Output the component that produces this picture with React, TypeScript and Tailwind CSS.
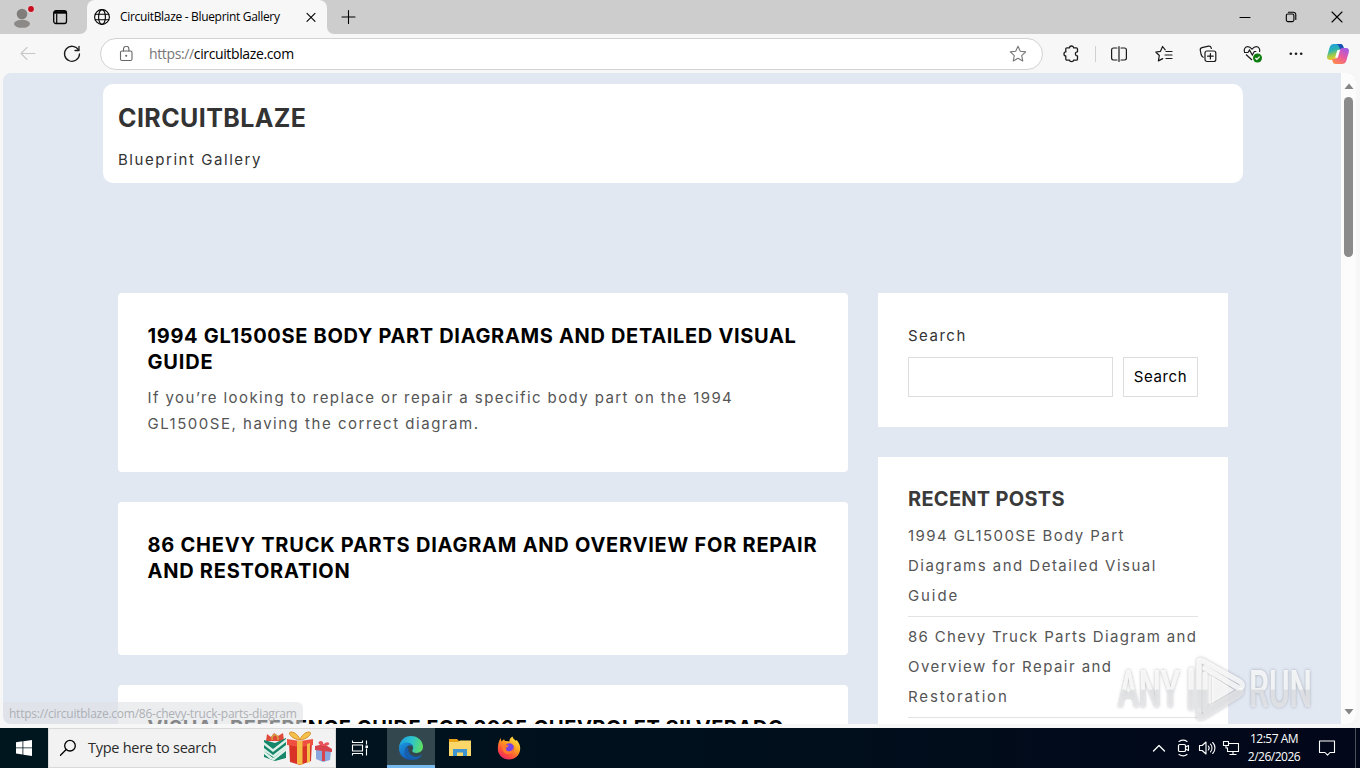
import type { ReactNode } from "react"

function Icon({ size = 16, className, children }: { size?: number; className?: string; children: ReactNode }) {
  return (
    <svg
      width={size}
      height={size}
      viewBox={`0 0 ${size} ${size}`}
      fill="none"
      stroke="currentColor"
      strokeWidth="1.1"
      strokeLinecap="round"
      strokeLinejoin="round"
      className={className}
    >
      {children}
    </svg>
  )
}

function TitleBar() {
  return (
    <div className="flex h-[34px] shrink-0 bg-[#f7f7f7] text-black">
      <div className="flex w-[87px] shrink-0 items-center rounded-br-[7px] bg-[#cdcdcd] pl-2.5">
        <svg width="26" height="26" viewBox="0 0 26 26">
          <circle cx="12" cy="10" r="5.3" fill="#817d7b" />
          <ellipse cx="12" cy="19.8" rx="8" ry="4" fill="#8c8987" />
          <circle cx="21" cy="5" r="3.8" fill="#e9cfd0" />
          <circle cx="21" cy="5" r="2.9" fill="#c50f1f" />
        </svg>
        <Icon size={16} className="ml-4">
          <rect x="1.7" y="1.7" width="12.8" height="12.8" rx="2.2" strokeWidth="1.3" />
          <path d="M2 3.4h12" strokeWidth="2.6" strokeLinecap="butt" />
          <path d="M4.7 5v9" strokeWidth="1.2" />
        </Icon>
      </div>
      <div className="flex w-[240px] shrink-0 bg-[#cdcdcd]">
        <div className="flex flex-1 items-center rounded-t-lg bg-[#f7f7f7] pl-[6px]">
          <Icon size={18}>
            <circle cx="9" cy="9" r="7.4" />
            <ellipse cx="9" cy="9" rx="3.4" ry="7.4" />
            <path d="M2.2 6.3h13.6M2.2 11.7h13.6" />
          </Icon>
          <span className="ml-[9px] w-[180px] text-xs tracking-[-0.32px] whitespace-nowrap">
            CircuitBlaze - Blueprint Gallery
          </span>
          <Icon size={16} className="ml-[3px]">
            <path d="M4 4.300l8 8M12 4.300l-8 8" />
          </Icon>
        </div>
      </div>
      <div className="flex flex-1 items-center rounded-bl-[7px] bg-[#cdcdcd] pl-[13px]">
        <Icon size={16}>
          <path d="M8.5 1.500v13M2 8h13" />
        </Icon>
      </div>
      <div className="flex items-center bg-[#cdcdcd]">
        <div className="flex w-[46px] justify-center">
          <Icon size={12}>
            <path d="M1 6.5h10" />
          </Icon>
        </div>
        <div className="flex w-[46px] justify-center">
          <Icon size={12}>
            <rect x="1.3" y="3" width="7.6" height="7.6" rx="1.6" />
            <path d="M3.4 1.2h4.800a2.600 2.600 0 0 1 2.600 2.600v4.600" />
          </Icon>
        </div>
        <div className="flex w-[46px] justify-center">
          <Icon size={12}>
            <path d="M1 1l10 10M11 1L1 11" />
          </Icon>
        </div>
      </div>
    </div>
  )
}

function CopilotLogo() {
  return (
    <svg width="24" height="24" viewBox="0 0 24 24">
      <defs>
        <linearGradient id="cpA" x1="0" y1="0" x2="0.3" y2="1">
          <stop offset="0" stopColor="#1a9be8" />
          <stop offset="0.45" stopColor="#2fb5b0" />
          <stop offset="0.75" stopColor="#a5cc45" />
          <stop offset="1" stopColor="#f7c52c" />
        </linearGradient>
        <linearGradient id="cpB" x1="0.8" y1="0" x2="0.2" y2="1">
          <stop offset="0" stopColor="#a05be8" />
          <stop offset="0.5" stopColor="#ea5a9c" />
          <stop offset="1" stopColor="#ff8a4a" />
        </linearGradient>
      </defs>
      <path d="M8 2h6.5c1.5 0 2.3 1 2.7 2.3L18 7h-2.500c-1.700 0-2.700 1-3.200 2.700l-1.700 5.600C10 17 9 18 7.300 18H4c-2.500 0-3.400-1.900-2.800-4.200l2.500-8.500C4.400 3.200 5.800 2 8 2z" fill="url(#cpA)" />
      <path d="M9 2h5.500c1.500 0 2.300 1 2.700 2.300L18 7h-4L12.500 3.500C12 2.500 11 2 9 2z" fill="#1a4fb8" />
      <path d="M16 22H9.500c-1.500 0-2.300-1-2.700-2.300L6 17h2.500c1.700 0 2.700-1 3.200-2.700l1.700-5.600C14 7 15 6 16.700 6H20c2.500 0 3.400 1.900 2.800 4.200l-2.500 8.500C19.600 20.800 18.200 22 16 22z" fill="url(#cpB)" />
      <path d="M14 8h-1.500c-.8 0-1.300.5-1.600 1.400l-1.800 6.300h1.700c.7 0 1.200-.4 1.400-1.300z" fill="#fff" />
    </svg>
  )
}

function Toolbar() {
  return (
    <div className="flex h-[39px] shrink-0 items-center bg-[#f7f7f7] pt-px text-[#1b1b1b]">
      <div className="flex w-[50px] justify-end pr-3.5 text-[#c8c8c8]">
        <Icon size={16}>
          <path d="M15 7.500H1M7 1.500l-6 6 6 6" />
        </Icon>
      </div>
      <div className="flex w-[50px] pl-[13px]">
        <Icon size={18}>
          <path d="M15.600 5.200A7.500 7.500 0 1 0 16.500 9" strokeWidth="1.300" />
          <path d="M16 1.500v4h-4" strokeWidth="1.300" />
        </Icon>
      </div>
      <div className="flex h-8 w-[943px] items-center rounded-full border border-[#d2d2d2] bg-white">
        <Icon size={16} className="ml-[17px] text-[#666]">
          <rect x="2.500" y="5" width="11.500" height="9.500" rx="1.500" />
          <path d="M5.500 5V3a2.700 2.700 0 0 1 5.400 0v2" />
          <circle cx="8.200" cy="9.700" r=".5" fill="currentColor" />
        </Icon>
        <span className="ml-[15px] text-sm tracking-[-0.37px] text-black">
          <span className="text-[#767676]">https://</span>circuitblaze.com
        </span>
        <Icon size={18} className="mr-[15px] ml-auto text-[#767676]">
          <path d="M9 1.300l2.300 5 5.400.6-4 3.700 1.100 5.400L9 13.300 4.200 16l1.100-5.400-4-3.700 5.400-.6z" />
        </Icon>
      </div>
      <div className="ml-[19px] flex items-center">
        <Icon size={18}>
          <path
            d="M5 2.800h2.600c0-2.400 4-2.400 4 0h2.700c.7 0 1.200.5 1.200 1.200v2.800c-2.800-.3-2.800 4.400 0 4.100v3.100c0 .7-.5 1.200-1.200 1.200h-2.700c0 1.900-4 1.900-4 0H5c-.7 0-1.200-.5-1.200-1.200v-3C1.400 11 1.400 6.900 3.800 6.900V4c0-.7.5-1.200 1.200-1.200z"
            strokeWidth="1.300"
          />
        </Icon>
        <span className="ml-[15px] h-4 w-px bg-[#d0d0d0]" />
        <Icon size={18} className="ml-[14px]">
          <path d="M7 3H3.500C2.400 3 1.600 3.800 1.600 4.900v8.200c0 1.100.8 1.900 1.900 1.900H7M11 3h3.500c1.100 0 1.900.8 1.900 1.900v8.200c0 1.100-.8 1.900-1.900 1.900H11M9 1.500v15" strokeWidth="1.200" />
        </Icon>
        <Icon size={18} className="ml-[27px]">
          <path d="M10.200 4.800L7.600 1.500 5.500 6.300l-4.700.7 3.500 3.500-.9 5.400 4.300-2.300M11 6.500h6M10 10h7M11 13.500h6" strokeWidth="1.200" />
        </Icon>
        <Icon size={18} className="ml-[26px]">
          <rect x="6" y="6" width="10.800" height="10.500" rx="2" strokeWidth="1.200" />
          <path d="M11.400 8.500v5.500M8.600 11.200h5.600M4.200 12.200C3 11.800 2.600 11 2.200 9.800L1.300 5.500C1 4 1.700 3 3 2.700l6.500-1.500c1.500-.3 2.500.5 2.800 2.300" strokeWidth="1.200" />
        </Icon>
        <svg width="20" height="20" viewBox="0 0 20 20" className="ml-[26px]" fill="none" stroke="currentColor" strokeWidth="1.200">
          <path d="M1.500 8C.5 5 2.300 2.700 4.700 2.700c1.900 0 3 .9 4.300 2.400 1.300-1.500 2.400-2.400 4.300-2.400 2.400 0 4.200 2.300 3.200 5.300M3 10.500L9 16M1 8.500h4L6.500 6l2.800 5 2-3.500h2" />
          <circle cx="14.500" cy="14" r="4.500" fill="#107c10" stroke="none" />
          <path d="M12.400 14l1.500 1.500 2.700-2.800" stroke="#fff" />
        </svg>
        <svg width="16" height="16" viewBox="0 0 16 16" className="ml-[25px]" fill="currentColor">
          <circle cx="2.800" cy="7.700" r="1.300" />
          <circle cx="8" cy="7.700" r="1.300" />
          <circle cx="13.200" cy="7.700" r="1.300" />
        </svg>
        <div className="ml-[22px]">
          <CopilotLogo />
        </div>
      </div>
    </div>
  )
}

function Post({ height, title, children }: { height: string; title: ReactNode; children?: ReactNode }) {
  return (
    <article className={`${height} shrink-0 rounded bg-white px-[29.5px] pt-[30px]`}>
      <h2 className="text-[20px] leading-[26px] font-bold whitespace-nowrap text-black">{title}</h2>
      {children}
    </article>
  )
}

function Page() {
  return (
    <div className="h-[651px] flex-1 overflow-hidden rounded-bl-lg font-[Inter,sans-serif] text-[15px]">
      <header className="mt-[11px] ml-[100px] h-[99px] w-[1140px] rounded-[10px] bg-white pt-[18px] pl-[15px]">
        <h1 className="text-[25px] leading-8 font-bold tracking-[0.4px] text-[#333]">CIRCUITBLAZE</h1>
        <p className="mt-[13px] leading-[26px] tracking-[1.55px] text-[#333]">Blueprint Gallery</p>
      </header>
      <div className="mt-[110px] ml-[115px] flex gap-[30px]">
        <main className="flex w-[730px] flex-col gap-[30px]">
          <Post
            height="h-[179px]"
            title={
              <>
                <span className="block tracking-[0.67px]">1994 GL1500SE BODY PART DIAGRAMS AND DETAILED VISUAL</span>
                <span className="block tracking-[0.8px]">GUIDE</span>
              </>
            }
          >
            <p className="mt-[10px] leading-[26px] whitespace-nowrap text-[#555]">
              <span className="block tracking-[1.41px]">If you’re looking to replace or repair a specific body part on the 1994</span>
              <span className="block tracking-[1.52px]">GL1500SE, having the correct diagram.</span>
            </p>
          </Post>
          <Post
            height="h-[153px]"
            title={
              <>
                <span className="block tracking-[0.76px]">86 CHEVY TRUCK PARTS DIAGRAM AND OVERVIEW FOR REPAIR</span>
                <span className="block tracking-[0.75px]">AND RESTORATION</span>
              </>
            }
          />
          <Post
            height="h-[153px]"
            title={<span className="block tracking-[0.53px]">VISUAL REFERENCE GUIDE FOR 2005 CHEVROLET SILVERADO</span>}
          />
        </main>
        <aside className="flex w-[350px] flex-col gap-[30px]">
          <section className="h-[134px] bg-white px-[30px] pt-[30px]">
            <label className="block leading-[26px] tracking-[1.5px] text-[#333]">Search</label>
            <div className="mt-2 flex gap-[10px]">
              <div className="h-10 w-[205px] border border-[#ddd]" />
              <button className="h-10 w-[75px] border border-[#ddd] text-[15px] tracking-[0.6px] text-black">Search</button>
            </div>
          </section>
          <section className="h-[400px] bg-white px-[30px] pt-[29px]">
            <h3 className="text-[20px] leading-[26px] font-bold tracking-[0.28px] text-[#3a3a3a]">RECENT POSTS</h3>
            <ul className="mt-[9px] leading-[30px] whitespace-nowrap text-[#555]">
              <li className="border-b border-[#e3e3e3] pb-[5px]">
                <span className="block tracking-[1.42px]">1994 GL1500SE Body Part</span>
                <span className="block tracking-[1.48px]">Diagrams and Detailed Visual</span>
                <span className="block tracking-[1.9px]">Guide</span>
              </li>
              <li className="border-b border-[#e3e3e3] pt-[5px] pb-[5px]">
                <span className="block tracking-[1.31px]">86 Chevy Truck Parts Diagram and</span>
                <span className="block tracking-[1.45px]">Overview for Repair and</span>
                <span className="block tracking-[1.85px]">Restoration</span>
              </li>
            </ul>
          </section>
        </aside>
      </div>
    </div>
  )
}

function Scrollbar() {
  return (
    <div className="flex h-[651px] w-[15px] flex-col items-center rounded-r-lg bg-[#fcfcfc] pt-[10px] pb-[9px]">
      <svg width="10" height="6" viewBox="0 0 10 6">
        <path d="M5 .5L9.500 6h-9z" fill="#858585" />
      </svg>
      <span className="mt-2 h-[160px] w-[9px] rounded-full bg-[#8b8b8b]" />
      <svg width="10" height="6" viewBox="0 0 10 6" className="mt-auto">
        <path d="M5 5.500L9.500 0h-9z" fill="#858585" />
      </svg>
    </div>
  )
}

function Watermark() {
  return (
    <svg className="absolute top-[654px] left-[1114px]" width="204" height="70" viewBox="0 0 204 70">
      <defs>
        <linearGradient id="wm" gradientUnits="userSpaceOnUse" x1="0" y1="0" x2="0" y2="70">
          <stop offset="0" stopColor="#fff" stopOpacity="0.8" />
          <stop offset="0.5" stopColor="#fff" stopOpacity="0.75" />
          <stop offset="0.52" stopColor="#e4e5e8" stopOpacity="0.75" />
          <stop offset="1" stopColor="#ececee" stopOpacity="0.75" />
        </linearGradient>
        <filter id="wmShadow" x="-10%" y="-10%" width="120%" height="125%">
          <feDropShadow dx="0" dy="0" stdDeviation="1.600" floodColor="#55555d" floodOpacity="0.600" />
        </filter>
      </defs>
      <g filter="url(#wmShadow)">
        <g fill="url(#wm)" fontFamily="Roboto, sans-serif" fontSize="52" fontWeight="500">
          <text x="4" y="53" textLength="62" lengthAdjust="spacingAndGlyphs">
            ANY
          </text>
          <text x="135" y="53" textLength="63" lengthAdjust="spacingAndGlyphs">
            RUN
          </text>
        </g>
        <g fill="none" stroke="url(#wm)" strokeWidth="5" strokeLinejoin="round" strokeLinecap="round">
          <path d="M77 16v38" />
          <path d="M85 56V8q0-3 4-1l36 20q6 4 1 8L91 14" />
          <path d="M85 56v6q0 3 4 1l36-22q3-2 2-5L91 57V20" />
        </g>
        <path d="M98 22l22 14-22 13z" fill="#fff" fillOpacity="0.750" />
      </g>
    </svg>
  )
}

function EdgeLogo() {
  return (
    <svg width="26" height="26" viewBox="0 0 26 26">
      <defs>
        <linearGradient id="edTop" x1="0" y1="0.300" x2="1" y2="0.500">
          <stop offset="0" stopColor="#1f9de0" />
          <stop offset="0.500" stopColor="#2cc3cf" />
          <stop offset="1" stopColor="#5ede62" />
        </linearGradient>
        <linearGradient id="edLow" x1="0" y1="0" x2="0.600" y2="1">
          <stop offset="0" stopColor="#1b9be0" />
          <stop offset="1" stopColor="#1256b5" />
        </linearGradient>
      </defs>
      <path d="M1 12.500C1.500 5.800 6.500 1 13 1c7 0 12 5 12 10.800 0 4-3 6.200-6.500 6.200-3 0-4.300-1.200-4.300-2.200 0-.8 1-1.200 1-3 0-2.500-2.300-4.600-5.200-4.600C5.500 8.200 2 10.500 1 12.500z" fill="url(#edTop)" />
      <path d="M1 13.500c0-3.500 3.500-6 7.500-6 3.500 0 6 2 6.500 4.200-1-1-2-1.300-3-1.300-3 0-5 2.500-5 5.800 0 4.300 3.500 8 8.500 8.600C7 26 1 20.500 1 13.500z" fill="url(#edLow)" />
      <path d="M10.500 13c-.8 6 4 9.200 8.500 8.500 2-.3 3.500-1.200 4.300-1.600.4-.2.700.2.500.6C22 23.500 18.700 25 15.500 24.800 10.500 24.300 7 20.500 7 16.200c0-1.200.5-3 1.500-4.200z" fill="#155fae" />
    </svg>
  )
}

function FirefoxLogo() {
  return (
    <svg width="24" height="24" viewBox="0 0 24 24">
      <defs>
        <linearGradient id="ff" x1="0.850" y1="0" x2="0.200" y2="1">
          <stop offset="0" stopColor="#fff14b" />
          <stop offset="0.400" stopColor="#ffa21f" />
          <stop offset="0.750" stopColor="#ff4a3c" />
          <stop offset="1" stopColor="#e8206f" />
        </linearGradient>
      </defs>
      <path d="M15.500.5c.3 2 2 3 3.300 4.200.6-.1.900-.7.900-.7 2.300 2.500 3.600 5.400 3.500 8.700C23 19 18.200 23.500 12 23.500S.8 18.800.8 12.700C.8 8.400 1.800 5 3.800 2c0 1.300.3 2.300.7 3.500.8-1 1.700-1.800 2.700-2.200 0 .7.400 1.400 1.200 1.700 1.500-.2 3 0 4 .5C12.300 3.500 13.500 1.500 15.500.5z" fill="url(#ff)" />
      <circle cx="12.500" cy="12" r="4.700" fill="#7542e5" />
      <path d="M5.500 9.500c2-1.300 4.200-1 6.300.2-.6 1.300-2.200 1.300-2.800 2.300-.5 1.400.6 3 2.600 3.200 3.200.3 5-1.700 4.800-5.200 1.500 4-1 8-5.400 8-4 0-6.300-4-5.500-8.500z" fill="#ff7a2c" />
    </svg>
  )
}

function Gifts() {
  return (
    <svg width="70" height="36" viewBox="0 0 70 36">
      <path d="M3 11l1-7 4 3 3-4 4 3 5-3 1 8z" fill="#e04a3a" />
      <path d="M9 10c-1-7 7-7 6 0" fill="none" stroke="#d5a741" strokeWidth="1.500" />
      <path d="M1 10l11 3 11-5v20l-11 3-11-4z" fill="#16866a" />
      <path d="M1 12l9 7L23 9v3L10 22l-9-7zM1 18l9 7 13-10v3L10 28l-9-7zM1 24l6 5 4 1.500 12-9.500v-3L11 27.500 1 21z" fill="#dff2ea" />
      <path d="M26 12l23-1-1 20-11 4-10-3z" fill="#d93328" />
      <path d="M24 9l13 2 13-2v6l-13 2-13-2z" fill="#ee5140" />
      <path d="M34 11h5.500v24l-5.500-1zM44 14l3-1v19l-3 1z" fill="#f4bd46" />
      <path d="M37 10C28 9 24 2 28 2c4 0 8 4 9 8 1-4 5-8 9-8 4 0 0 7-9 8z" fill="#f4c04c" stroke="#d8902c" />
      <path d="M53 19l15 2-1 9-7 2-7-3z" fill="#8aa6df" />
      <path d="M52 16l9-2 8 5v3l-9-1-8-1z" fill="#d8434c" />
      <path d="M59 16h3v15h-3z" fill="#d8434c" />
      <path d="M60 16c-5-1-6-5-2-5 2 0 3 3 2 5 1-3 4-5 6-3 1 2-2 3-6 3z" fill="#e9545a" />
    </svg>
  )
}

function Taskbar() {
  return (
    <div className="flex h-10 shrink-0 bg-linear-to-r from-[#00161f] via-[#00101d] to-[#020719] text-white">
      <div className="flex w-12 items-center justify-center">
        <svg width="16" height="16" viewBox="0 0 16 16" fill="#fff">
          <path d="M0 2.200L6.500 1.300v6.200H0zM7.300 1.200L16 0v7.500H7.300zM0 8.300h6.500v6.200L0 13.600zM7.300 8.300H16V16l-8.700-1.200z" />
        </svg>
      </div>
      <div className="flex w-72 items-center border border-[#d9d9d9] bg-[#f2f2f2] text-[#2b2b2b]">
        <Icon size={18} className="ml-[10px] text-black">
          <circle cx="11" cy="6.700" r="5.300" strokeWidth="1.300" />
          <path d="M7.200 10.500L1.500 16.200" strokeWidth="1.300" />
        </Icon>
        <span className="ml-[11px] text-[14.5px] tracking-[-0.27px] whitespace-nowrap">Type here to search</span>
        <div className="ml-auto pr-0.5">
          <Gifts />
        </div>
      </div>
      <div className="flex w-[51px] items-center justify-center pr-[3px]">
        <Icon size={18}>
          <path d="M1.500 1.500v2h10v-2M1.500 16.500v-2h10v2M1.500 6h10v6h-10zM15.500 1.500v4M15.500 9.500v7" strokeLinecap="butt" />
          <path d="M14.500 6.500h2.500v2.500h-2.500z" fill="#fff" stroke="none" />
        </Icon>
      </div>
      <div className="flex w-12 items-center justify-center border-b-[3px] border-[#76b9ed] bg-[#33474f] pt-[3px]">
        <EdgeLogo />
      </div>
      <div className="flex w-[49px] items-center justify-center">
        <svg width="24" height="24" viewBox="0 0 24 24">
          <path d="M1 3h8l2 2h12v5H1z" fill="#e8a317" />
          <path d="M1 6h9l2-1.500h11V20H1z" fill="#fbd668" />
          <path d="M5 13h14v7h-4v-3.500H9V20H5z" fill="#3f94d1" />
        </svg>
      </div>
      <div className="flex w-12 items-center justify-center pl-0.5">
        <FirefoxLogo />
      </div>
      <div className="ml-auto flex items-center">
        <Icon size={14}>
          <path d="M1.500 10L7 4.500l5.500 5.500" strokeWidth="1.300" />
        </Icon>
        <Icon size={18} className="ml-2">
          <rect x="4.500" y="5.500" width="7" height="7" rx="1.300" strokeWidth="1.200" />
          <path d="M11.500 8l3-1.500v5l-3-1.500M5 2.500c2.500-1.500 6-1.500 8 0M5 15.500c2.500 1.500 6 1.500 8 0" />
        </Icon>
        <Icon size={18} className="ml-[6px]">
          <path d="M1.500 6.500h2.700L8 3v12l-3.800-3.500H1.500zM10.300 7c.9 1 .9 3 0 4M12.500 5.200c2 2 2 5.600 0 7.600M14.700 3.500c3 3 3 8 0 11" />
        </Icon>
        <Icon size={18} className="ml-[6px]">
          <path d="M6.500 4.500h10v8h-11V9M11 12.500v3M7.500 15.500h7M1.500 2.500h5v4h-5zM4 6.500V9h2" strokeLinecap="butt" />
        </Icon>
        <div className="ml-[4px] w-[60px] text-center text-xs leading-[18px] tracking-[-0.5px] whitespace-nowrap">
          <div>12:57 AM</div>
          <div>2/26/2026</div>
        </div>
        <Icon size={18} className="ml-[14px]">
          <path d="M1.500 2h15v11.500H12L9.500 16.200 7 13.500H1.500z" />
        </Icon>
        <span className="ml-[19px] h-10 w-px bg-[#4b505c]" />
        <span className="w-1" />
      </div>
    </div>
  )
}

export default function App() {
  return (
    <div className="relative flex h-[768px] w-[1360px] flex-col overflow-hidden bg-[#f7f7f7] font-['Open_Sans',sans-serif]">
      <TitleBar />
      <Toolbar />
      <div className="flex h-[655px] shrink-0 pr-1 pb-1 pl-[3px]">
        <div className="flex flex-1 overflow-hidden rounded-lg bg-[#e1e8f2]">
          <Page />
          <Scrollbar />
        </div>
      </div>
      <Taskbar />
      <div className="absolute top-[702px] left-[3px] flex h-[22px] w-[300px] items-center rounded-tr-md rounded-bl-lg bg-[#dfe1e5]/60 pt-0.5 pl-[6px] text-xs tracking-[-0.25px] whitespace-nowrap text-[#adb0b5]">
        https://circuitblaze.com/86-chevy-truck-parts-diagram
      </div>
      <Watermark />
    </div>
  )
}
